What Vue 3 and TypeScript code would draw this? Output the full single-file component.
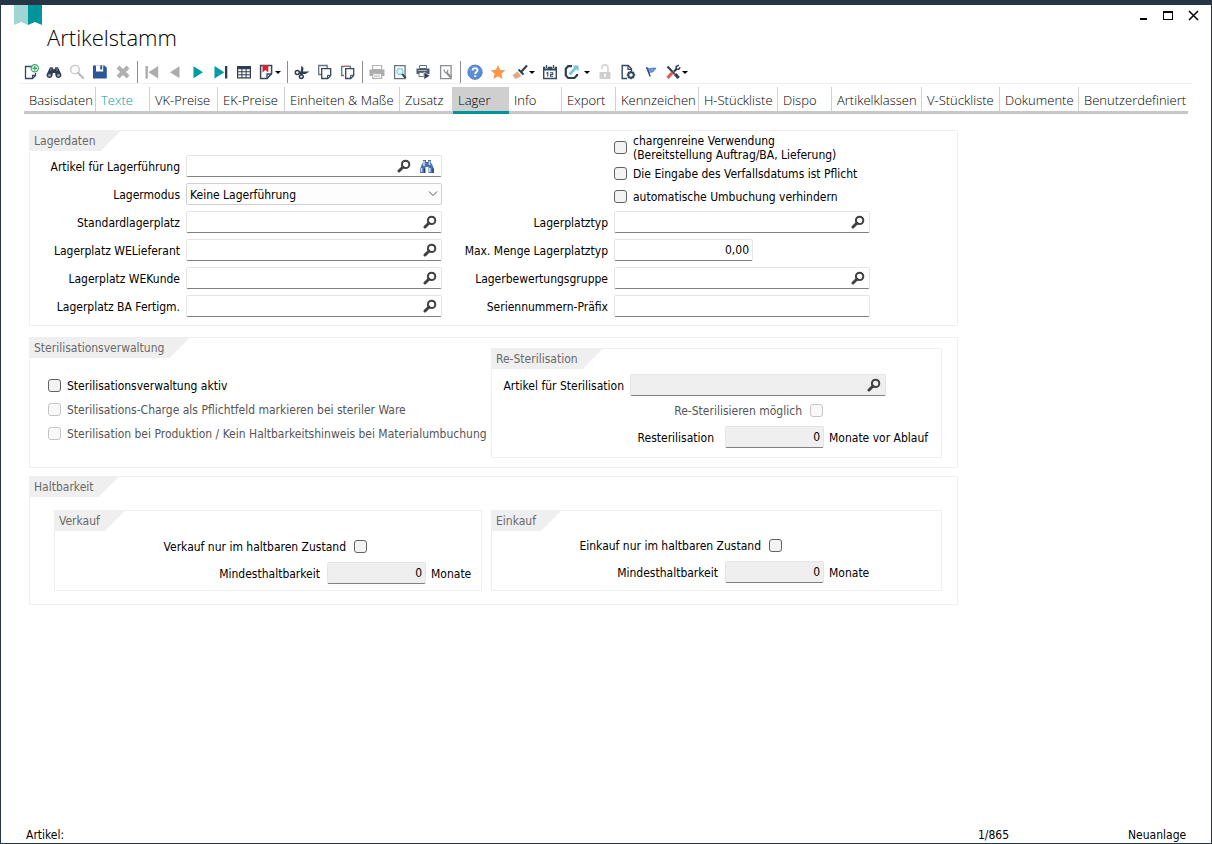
<script setup lang="ts">
import { ref } from 'vue'

interface Tool {
  icon: string
  title: string
  menu?: boolean
  wide?: boolean
}

const icons: Record<string, string> = {
  add: '<path d="M9 2.5H2.5v12h7l3-3V9" fill="none" stroke="#34495e" stroke-width="1.3"/><path d="M9.5 14.5v-3.2h3.2" fill="none" stroke="#34495e" stroke-width="1.2"/><circle cx="11.8" cy="4.3" r="3.6" fill="#fff" stroke="#3aa866" stroke-width="1.2"/><path d="M11.8 2v4.6M9.5 4.3h4.6" stroke="#3aa866" stroke-width="1.4"/>',
  binoculars: '<path d="M4 3.2h2.6l.8 2h1.2l.8-2H12l3.4 7.3a3 3 0 1 1-6 .8L9.2 9H6.8l-.2 2.3a3 3 0 1 1-6-.8z" fill="#2c3e50"/><circle cx="3.5" cy="11.3" r="1.5" fill="#8fa1b1"/><circle cx="12.5" cy="11.3" r="1.5" fill="#8fa1b1"/><path d="M5 3v4M11 3v4" stroke="#6f8497"/>',
  search: '<circle cx="6" cy="5.6" r="4.3" fill="#fbfbfb" stroke="#c8c8c8" stroke-width="1.3"/><path d="M9.2 9l5 5" stroke="#bcbcbc" stroke-width="2.3" stroke-linecap="round"/>',
  save: '<path d="M1 1.5h11.5l2.3 2.2v10.8H1z" fill="#2b579a"/><path d="M4 1.5h7.2v6H4z" fill="#fff"/><path d="M8.2 1.5h2v4h-2z" fill="#2b579a"/>',
  remove: '<path d="M3 3l10 10M13 3L3 13" stroke="#b0b0b0" stroke-width="4"/>',
  first: '<path d="M1.5 2h2.4v12.5H1.5zM14.2 2v12.5L4.4 8.2z" fill="#acacac"/>',
  prev: '<path d="M12.5 2.2v12L3 8.2z" fill="#acacac"/>',
  next: '<path d="M3.5 2.2v12l9.5-6z" fill="#009ca3"/>',
  last: '<path d="M1.5 2v12.5l9.8-6.3z" fill="#009ca3"/><path d="M12 2h2.3v12.5H12z" fill="#2c3e50"/>',
  table: '<path d="M1 2h14v12.5H1z" fill="#2c3e50"/><path d="M2.2 5.2h3.2v2H2.2zm4.2 0h3.2v2H6.4zm4.2 0h3.2v2h-3.2zm-8.4 3h3.2v2H2.2zm4.2 0h3.2v2H6.4zm4.2 0h3.2v2h-3.2zm-8.4 3h3.2v2H2.2zm4.2 0h3.2v2H6.4zm4.2 0h3.2v2h-3.2z" fill="#fff"/>',
  bookmark: '<path d="M2.6 1.6h11v8l-4.5 5H2.6z" fill="#fff" stroke="#34495e" stroke-width="1.5"/><path d="M9 14.4V10h4.4" fill="none" stroke="#34495e" stroke-width="1.3"/><path d="M4.5 1h5.8v7.5L7.4 6 4.5 8.5z" fill="#d8232f"/>',
  cut: '<circle cx="3.3" cy="8.4" r="2" fill="none" stroke="#2c3e50" stroke-width="1.5"/><circle cx="7.3" cy="12.6" r="1.9" fill="none" stroke="#2c3e50" stroke-width="1.5"/><path d="M5 7.500h10.500l-4 2.500H6zM6.200 11.500L7.500 1.500l2 2.500-1 7z" fill="#2c3e50"/>',
  copy: '<path d="M4 10.5H1.7v-9h8.5V4" fill="none" stroke="#66757f" stroke-width="1.3"/><path d="M4.7 4.7h9v6.8l-3 3h-6z" fill="#fff" stroke="#34495e" stroke-width="1.3"/><path d="M10.5 14.5v-3.2h3.2" fill="none" stroke="#34495e"/>',
  paste: '<path d="M4 11.5H1.7v-9H4M8.5 2.5h2V4" fill="none" stroke="#66757f" stroke-width="1.3"/><path d="M4 1.5h5V3H4z" fill="#a87878"/><path d="M5.7 4.7h8v6.8l-3 3h-5z" fill="#fff" stroke="#34495e" stroke-width="1.3"/><path d="M10.5 14.5v-3.2h3.2" fill="none" stroke="#34495e"/>',
  print: '<path d="M3.6 1.5h9v4h-9z" fill="#fff" stroke="#b4b4b4" stroke-width="1.2"/><path d="M.5 5.5h15V12H.5z" fill="#acacac"/><path d="M3.6 9.6h9v4.8h-9z" fill="#fff" stroke="#b4b4b4" stroke-width="1.2"/><path d="M5 12h6" stroke="#b4b4b4"/>',
  preview: '<path d="M2.6 1.6h10.5v13H2.6z" fill="#fff" stroke="#66757f" stroke-width="1.3"/><circle cx="8" cy="7.5" r="3" fill="#e4f6fa" stroke="#8fd0df" stroke-width="1.3"/><path d="M10.3 10l3.2 4" stroke="#2c3e50" stroke-width="2"/>',
  printrun: '<path d="M4.500 1.500h7v3h-7z" fill="#fff" stroke="#66757f"/><path d="M1.500 4.500h13V10h-13z" fill="#4a5b6b"/><path d="M3 6.500h9" stroke="#aab5be"/><path d="M4 8.500h5v4H4z" fill="#fff" stroke="#66757f"/><path d="M9 8v7.500l6-3.700z" fill="#2c3e50" stroke="#fff" stroke-width=".6"/>',
  pagetool: '<path d="M2.6 1.6h10.5v13H2.6z" fill="#fff" stroke="#878f96" stroke-width="1.3"/><path d="M8.5 8.5l4.5 5" stroke="#8a8a8a" stroke-width="2"/><path d="M6.500 5.500a1.800 1.800 0 1 0 3 .3" fill="none" stroke="#999" stroke-width="1.4"/>',
  help: '<circle cx="8" cy="8.2" r="7.2" fill="#5b8dd6" stroke="#4277c4" stroke-width=".8"/><path d="M5.6 6.5c0-3.200 5-3 4.900-.2 0 1.700-2.300 1.800-2.300 3.700M8.200 11.200v1.900" fill="none" stroke="#fff" stroke-width="1.9"/>',
  star: '<path d="M8 1l2.1 4.900 5.300.4-4 3.500 1.200 5.200L8 12.300 3.400 15l1.200-5.200-4-3.500 5.300-.4z" fill="#ff9447"/>',
  brush: '<path d="M5 7.2l4.300 4.300c-1.800 1.800-4.300 3-6 3.500L.5 11.200C2 10 4 9 5 7.200z" fill="#dfa98a"/><path d="M6.500 5.500l5 5" stroke="#2c3e50" stroke-width="1.8"/><path d="M9 8l6-6.500" stroke="#2c3e50" stroke-width="2"/>',
  calendar: '<path d="M1.7 3.5h12.600v11H1.700z" fill="#fff" stroke="#34495e" stroke-width="1.4"/><path d="M1 3h14v3.500H1z" fill="#34495e"/><path d="M4.500 1v3.500M11.500 1v3.500" stroke="#fff" stroke-width="2.4"/><path d="M4.500 1v3M11.500 1v3" stroke="#34495e" stroke-width="1.2"/><path d="M4.500 9.200l1.300-.7v4M8 8.800h2.700v1.700H8.500v1.700h2.700" fill="none" stroke="#34495e" stroke-width="1.1"/>',
  exportTo: '<path d="M8 2.2H4.200L1.800 4.600v6.800L4.200 14h6.200l2.600-2.600V10" fill="none" stroke="#2c3e50" stroke-width="2.2"/><path d="M5.500 10.500l6.500-7" stroke="#75c7d9" stroke-width="2.6"/><path d="M8.500 1.500h6v6z" fill="#75c7d9"/>',
  unlock: '<path d="M2.500 8h11v7h-11z" fill="#cfcfcf"/><path d="M5 5V4a3 3 0 0 1 6-.3V8" fill="none" stroke="#d6d6d6" stroke-width="1.8"/><path d="M8 10v3" stroke="#fff" stroke-width="1.6"/>',
  pagegear: '<path d="M7 14.500H2.200v-13h6l3.300 3.300V7" fill="none" stroke="#34495e" stroke-width="1.4"/><path d="M8 1.800v3.500h3.500" fill="none" stroke="#34495e" stroke-width="1.2"/><circle cx="11" cy="11" r="2.7" fill="#fff" stroke="#34495e" stroke-width="1.9"/><path d="M11 6.700v1.800M11 13.500v1.800M6.700 11h1.800M13.500 11h1.800M8 8l1.200 1.200M12.800 12.800L14 14M14 8l-1.200 1.200M9.200 12.800L8 14" stroke="#34495e" stroke-width="1.5"/>',
  flag: '<path d="M4.500 4.200c3 1.600 5-1.200 8.600.2-1.700.8-2 2.600-3.400 3.700-1.500.3-2.500-.2-3.700.9z" fill="#6f9be6" stroke="#3f69b8" stroke-width=".8"/><path d="M3.500 3l3.700 9.500" stroke="#2d468c" stroke-width="1.4"/>',
  tools: '<path d="M2.500 2.500l7 7.500" stroke="#2c3e50" stroke-width="2"/><path d="M10 10l3.700 4" stroke="#2c3e50" stroke-width="3.2"/><path d="M11.500 5L9 7.500" stroke="#2c3e50" stroke-width="2.2"/><path d="M13.800 1.200l-2.600 1.300v2.600l2.500.2 1.500-2.200" fill="none" stroke="#2c3e50" stroke-width="1.5"/><path d="M7.500 8.500l-5 5.500" stroke="#e05a55" stroke-width="3.2"/>',
}

const groups: Tool[][] = [
  [
    { icon: 'add', title: 'Neu' },
    { icon: 'binoculars', title: 'Suchen' },
    { icon: 'search', title: 'Lupe' },
    { icon: 'save', title: 'Speichern' },
    { icon: 'remove', title: 'Löschen' },
  ],
  [
    { icon: 'first', title: 'Erster' },
    { icon: 'prev', title: 'Zurück' },
    { icon: 'next', title: 'Weiter' },
    { icon: 'last', title: 'Letzter' },
    { icon: 'table', title: 'Tabelle' },
    { icon: 'bookmark', title: 'Lesezeichen', menu: true },
  ],
  [
    { icon: 'cut', title: 'Ausschneiden' },
    { icon: 'copy', title: 'Kopieren' },
    { icon: 'paste', title: 'Einfügen' },
  ],
  [
    { icon: 'print', title: 'Drucken' },
    { icon: 'preview', title: 'Vorschau' },
    { icon: 'printrun', title: 'Direktdruck' },
    { icon: 'pagetool', title: 'Druckeinstellungen' },
  ],
  [
    { icon: 'help', title: 'Hilfe' },
    { icon: 'star', title: 'Favorit' },
    { icon: 'brush', title: 'Design', menu: true },
    { icon: 'calendar', title: 'Kalender' },
    { icon: 'exportTo', title: 'Export', menu: true, wide: true },
    { icon: 'unlock', title: 'Entsperren' },
    { icon: 'pagegear', title: 'Konfiguration' },
    { icon: 'flag', title: 'Markierung' },
    { icon: 'tools', title: 'Werkzeuge', menu: true },
  ],
]

const tabs = [
  'Basisdaten', 'Texte', 'VK-Preise', 'EK-Preise', 'Einheiten & Maße', 'Zusatz', 'Lager', 'Info',
  'Export', 'Kennzeichen', 'H-Stückliste', 'Dispo', 'Artikelklassen', 'V-Stückliste', 'Dokumente',
  'Benutzerdefiniert',
]
const activeTab = ref('Lager')

const lens =
  '<circle cx="8.6" cy="5.4" r="3.7" fill="none" stroke="#404040" stroke-width="2"/><path d="M6 8l-4 4" stroke="#404040" stroke-width="3" stroke-linecap="round"/>'

const places = [
  { id: 'standard', label: 'Standardlagerplatz' },
  { id: 'lieferant', label: 'Lagerplatz WELieferant' },
  { id: 'kunde', label: 'Lagerplatz WEKunde' },
  { id: 'fertigm', label: 'Lagerplatz BA Fertigm.' },
]
</script>

<template>
  <div class="window">
    <header class="titlebar">
      <svg class="logo" width="28" height="20" viewBox="0 0 28 20" aria-hidden="true">
        <path d="M0 0h14v20l-7-3-7 3z" fill="#9fd6d3" />
        <path d="M14 0h14v20l-7-3-7 3z" fill="#00949b" />
      </svg>
      <h1>Artikelstamm</h1>
      <div class="controls">
        <button type="button" aria-label="Minimieren">
          <svg width="11" height="11" viewBox="0 0 11 11"><path d="M2 8h7v2H2z" /></svg>
        </button>
        <button type="button" aria-label="Maximieren">
          <svg width="11" height="11" viewBox="0 0 11 11"><path d="M0 1h10v9H0zM1 3v6h8V3z" fill-rule="evenodd" /></svg>
        </button>
        <button type="button" aria-label="Schließen">
          <svg width="11" height="11" viewBox="0 0 11 11"><path d="M1 1l9 9M10 1l-9 9" stroke="#000" stroke-width="1.5" /></svg>
        </button>
      </div>
    </header>

    <div class="toolbar" role="toolbar" aria-label="Werkzeuge">
      <div v-for="(group, g) in groups" :key="g" class="tools">
        <button
          v-for="tool in group"
          :key="tool.icon"
          type="button"
          class="tool"
          :class="{ menu: tool.menu, wide: tool.wide }"
          :aria-label="tool.title"
        >
          <svg width="16" height="16" viewBox="0 0 16 16" v-html="icons[tool.icon]" />
          <svg v-if="tool.menu" class="caret" width="6" height="3" viewBox="0 0 6 3"><path d="M0 0h6L3 3z" /></svg>
        </button>
      </div>
    </div>

    <nav class="tabs" role="tablist">
      <button
        v-for="tab in tabs"
        :key="tab"
        type="button"
        role="tab"
        class="tab"
        :class="{ active: tab === activeTab, marked: tab === 'Texte' }"
        :aria-selected="tab === activeTab"
        @click="activeTab = tab"
      >
        <span>{{ tab }}</span>
      </button>
    </nav>

    <main>
      <section class="group stock" aria-labelledby="g-lager">
        <div class="column">
          <h2 id="g-lager">Lagerdaten</h2>
          <div class="form left">
            <label for="artikel">Artikel für Lagerführung</label>
            <div class="field double">
              <input id="artikel" type="text" />
              <button type="button" aria-label="Artikel suchen"><svg width="14" height="14" viewBox="0 0 14 14" v-html="lens" /></button>
              <button type="button" aria-label="Artikelliste">
                <svg width="16" height="16" viewBox="0 0 16 16">
                  <path d="M4 2h3v2h2V2h3v3l1 1 2 5v4H9.5V9h-3v6H1v-4l2-5 1-1z" fill="#4a72b0" />
                  <path d="M2.5 10v4M10.8 10v4M5 3v5M10.5 3v4" stroke="#c3dbf5" stroke-width="1.6" />
                  <path d="M5.5 10.5V15M14 10.5V15" stroke="#233f78" stroke-width="1.2" />
                </svg>
              </button>
            </div>
            <label for="modus">Lagermodus</label>
            <div class="select">
              <select id="modus"><option>Keine Lagerführung</option></select>
              <svg width="10" height="6" viewBox="0 0 10 6"><path d="M1 .5l4 4 4-4" fill="none" stroke="#555" /></svg>
            </div>
            <template v-for="place in places" :key="place.id">
              <label :for="place.id">{{ place.label }}</label>
              <div class="field">
                <input :id="place.id" type="text" />
                <button type="button" :aria-label="place.label + ' suchen'"><svg width="14" height="14" viewBox="0 0 14 14" v-html="lens" /></button>
              </div>
            </template>
          </div>
        </div>
        <div class="column">
          <div class="checks options">
            <label class="check"><input type="checkbox" /><span>chargenreine Verwendung<br />(Bereitstellung Auftrag/BA, Lieferung)</span></label>
            <label class="check"><input type="checkbox" /><span>Die Eingabe des Verfallsdatums ist Pflicht</span></label>
            <label class="check"><input type="checkbox" /><span>automatische Umbuchung verhindern</span></label>
          </div>
          <div class="form right">
            <label for="typ">Lagerplatztyp</label>
            <div class="field">
              <input id="typ" type="text" />
              <button type="button" aria-label="Lagerplatztyp suchen"><svg width="14" height="14" viewBox="0 0 14 14" v-html="lens" /></button>
            </div>
            <label for="menge">Max. Menge Lagerplatztyp</label>
            <div class="field amount"><input id="menge" type="text" value="0,00" /></div>
            <label for="gruppe">Lagerbewertungsgruppe</label>
            <div class="field">
              <input id="gruppe" type="text" />
              <button type="button" aria-label="Lagerbewertungsgruppe suchen"><svg width="14" height="14" viewBox="0 0 14 14" v-html="lens" /></button>
            </div>
            <label for="prefix">Seriennummern-Präfix</label>
            <div class="field"><input id="prefix" type="text" /></div>
          </div>
        </div>
      </section>

      <section class="group steril" aria-labelledby="g-steril">
        <div class="column">
          <h2 id="g-steril">Sterilisationsverwaltung</h2>
          <div class="checks sterilchecks">
            <label class="check"><input type="checkbox" /><span>Sterilisationsverwaltung aktiv</span></label>
            <label class="check disabled"><input type="checkbox" disabled /><span>Sterilisations-Charge als Pflichtfeld markieren bei steriler Ware</span></label>
            <label class="check disabled"><input type="checkbox" disabled /><span>Sterilisation bei Produktion / Kein Haltbarkeitshinweis bei Materialumbuchung</span></label>
          </div>
        </div>
        <section class="group resteril" aria-labelledby="g-resteril">
          <h2 id="g-resteril">Re-Sterilisation</h2>
          <div class="form restform">
            <label for="sterilartikel">Artikel für Sterilisation</label>
            <div class="field off">
              <input id="sterilartikel" type="text" readonly />
              <button type="button" aria-label="Artikel für Sterilisation suchen"><svg width="14" height="14" viewBox="0 0 14 14" v-html="lens" /></button>
            </div>
          </div>
          <label class="check disabled after"><span>Re-Sterilisieren möglich</span><input type="checkbox" disabled /></label>
          <div class="months rest">
            <label for="rest">Resterilisation</label>
            <div class="field off number"><input id="rest" type="text" value="0" readonly /></div>
            <span>Monate vor Ablauf</span>
          </div>
        </section>
      </section>

      <section class="group shelf" aria-labelledby="g-halt">
        <h2 id="g-halt">Haltbarkeit</h2>
        <div class="pair">
          <section class="group sale" aria-labelledby="g-verkauf">
            <h2 id="g-verkauf">Verkauf</h2>
            <label class="check after"><span>Verkauf nur im haltbaren Zustand</span><input type="checkbox" /></label>
            <div class="months">
              <label for="mindvk">Mindesthaltbarkeit</label>
              <div class="field off number"><input id="mindvk" type="text" value="0" readonly /></div>
              <span>Monate</span>
            </div>
          </section>
          <section class="group buy" aria-labelledby="g-einkauf">
            <h2 id="g-einkauf">Einkauf</h2>
            <label class="check after"><span>Einkauf nur im haltbaren Zustand</span><input type="checkbox" /></label>
            <div class="months">
              <label for="mindek">Mindesthaltbarkeit</label>
              <div class="field off number"><input id="mindek" type="text" value="0" readonly /></div>
              <span>Monate</span>
            </div>
          </section>
        </div>
      </section>
    </main>

    <footer>
      <span>Artikel:</span>
      <span>1/865</span>
      <span>Neuanlage</span>
    </footer>
  </div>
</template>

<style>
body {
  margin: 0;
}
</style>

<style scoped>
.window {
  box-sizing: border-box;
  min-height: 100vh;
  display: flex;
  flex-direction: column;
  background: #fff;
  border: 1px solid #253746;
  border-top-width: 5px;
  color: #000;
  font: 12px/16px "DejaVu Sans Condensed", "Noto Sans", sans-serif;
}
h1,
h2 {
  margin: 0;
  font-weight: 400;
}
button {
  padding: 0;
  border: 0;
  background: none;
  color: inherit;
  font: inherit;
}
svg {
  display: block;
}
.titlebar {
  display: flex;
  align-items: flex-start;
  height: 56px;
  padding: 0 12px 0 13px;
}
.titlebar h1 {
  margin: 16px 0 0 5px;
  font: 300 22px/32px "Open Sans", "Noto Sans", sans-serif;
}
.controls {
  display: flex;
  gap: 14px;
  margin: 5px 0 0 auto;
}
.toolbar {
  display: flex;
  height: 22px;
  margin: 0 19px 0 18px;
  border-bottom: 1px solid #efefef;
}
.tools {
  display: flex;
}
.tools + .tools {
  margin-left: 3px;
  padding-left: 2px;
  border-left: 1px solid #8c8c8c;
}
.tool {
  display: flex;
  align-items: center;
  justify-content: center;
  width: 23px;
  height: 22px;
}
.tool.menu {
  justify-content: flex-start;
  width: 29px;
  padding-left: 3px;
}
.tool.wide {
  width: 32px;
}
.caret {
  margin-left: 1px;
}
.wide .caret {
  margin-left: 4px;
}
.tabs {
  display: grid;
  grid-template-columns: 72fr 54fr 68fr 67fr 115fr 53fr 56fr 53fr 54fr 83fr 79fr 54fr 90fr 78fr 79fr 109fr;
  margin: 3px 23px 0;
  font: 300 13px/24px "Open Sans", "Noto Sans", sans-serif;
}
.tab {
  box-sizing: border-box;
  min-width: 0;
  height: 27px;
  border-bottom: 3px solid #c8c8c8;
  text-align: left;
  white-space: nowrap;
}
.tab span {
  display: block;
  height: 24px;
  padding-left: 5px;
  border-right: 1px solid #d0d0d0;
  line-height: 27px;
}
.tab:last-child span,
.tab.active span {
  border-right-color: transparent;
}
.tab.marked {
  color: #009ca3;
}
.tab.active {
  background: #cfcfcf;
  border-bottom-color: #00949b;
}
main {
  display: flex;
  flex-direction: column;
  max-width: 929px;
  padding: 16px 28px 0;
}
.group {
  box-sizing: border-box;
  border: 1px solid #efefef;
}
.group h2 {
  width: max-content;
  height: 20px;
  padding: 0 25px 0 4px;
  background: #efefef;
  clip-path: polygon(0 0, 100% 0, calc(100% - 20px) 100%, 0 100%);
  color: #696969;
  font-size: 12px;
  line-height: 20px;
}
.stock {
  display: flex;
  padding-bottom: 8px;
}
.form {
  display: grid;
  align-items: center;
  gap: 6px;
  text-align: right;
  white-space: nowrap;
}
.form label,
.months label,
.months > span,
.check span {
  padding-top: 2px;
}
.left {
  grid-template-columns: 150px 256px;
  margin-top: 4px;
}
.right {
  grid-template-columns: 166px 256px;
}
.field {
  box-sizing: border-box;
  display: flex;
  align-items: center;
  gap: 8px;
  height: 22px;
  padding-right: 4px;
  border: 1px solid #e5e5e5;
  border-bottom-color: #808080;
  border-radius: 2px;
  background: #fff;
}
.field.double {
  padding-right: 6px;
}
.field input {
  flex: 1;
  min-width: 0;
  height: 20px;
  padding: 0 3px;
  border: 0;
  background: none;
  outline: none;
  color: inherit;
  font: inherit;
}
.field.off {
  background: #efefef;
}
.field.amount {
  width: 139px;
  padding-right: 0;
}
.field.number {
  width: 99px;
  padding-right: 0;
}
.amount input,
.number input {
  text-align: right;
}
.select {
  display: grid;
  align-items: center;
  height: 22px;
}
.select > * {
  grid-area: 1 / 1;
}
.select svg {
  justify-self: end;
  margin-right: 4px;
  pointer-events: none;
}
.select select {
  width: 100%;
  height: 22px;
  padding: 2px 3px 0;
  appearance: none;
  border: 1px solid #d0d0d0;
  border-radius: 2px;
  background: #fdfdfd;
  color: inherit;
  font: inherit;
}
.checks {
  display: grid;
}
.check {
  display: flex;
  align-items: center;
  gap: 6px;
  line-height: 14px;
  white-space: nowrap;
}
.check input {
  flex: none;
  width: 13px;
  height: 13px;
  margin: 0;
  appearance: none;
  border: 1px solid #626262;
  border-radius: 3px;
  background: #f3f3f3;
}
.check input:checked {
  background: #00949b;
}
.check.disabled {
  color: #555;
}
.check.disabled input {
  border-color: #c5c5c5;
  background: #f9f9f9;
}
.check.after {
  justify-content: flex-end;
  gap: 8px;
}
.options {
  grid-template-rows: 30px 22px 24px;
  margin: 1px 0 3px;
  padding-left: 172px;
}
.steril {
  display: flex;
  justify-content: space-between;
  margin-top: 11px;
  padding: 0 15px 9px 0;
}
.sterilchecks {
  gap: 8px;
  margin: 19px 0 0 18px;
}
.resteril {
  flex: none;
  width: 451px;
  margin-top: 10px;
  padding-bottom: 9px;
}
.restform {
  grid-template-columns: 132px 256px;
  margin: 5px 0 6px;
}
.resteril .check {
  margin-right: 118px;
}
.months {
  display: grid;
  align-items: center;
  gap: 5px;
  text-align: right;
  white-space: nowrap;
}
.months label {
  padding-right: 2px;
}
.months > span {
  text-align: left;
}
.rest {
  grid-template-columns: 228px 99px auto;
  margin-top: 8px;
}
.rest label {
  padding-right: 6px;
}
.shelf {
  margin-top: 8px;
  padding-bottom: 13px;
}
.pair {
  display: grid;
  grid-template-columns: 428fr 451fr;
  gap: 9px;
  margin: 13px 15px 0 24px;
}
.sale,
.buy {
  padding-bottom: 6px;
}
.sale .months {
  grid-template-columns: 267px 99px auto;
}
.buy .months {
  grid-template-columns: 228px 99px auto;
}
.sale .check {
  margin: 7px 114px 8px 0;
}
.buy .check {
  margin: 6px 159px 8px 0;
}
footer {
  display: grid;
  grid-template-columns: 952fr 150fr 83fr;
  margin-top: auto;
  padding-left: 25px;
}
</style>
